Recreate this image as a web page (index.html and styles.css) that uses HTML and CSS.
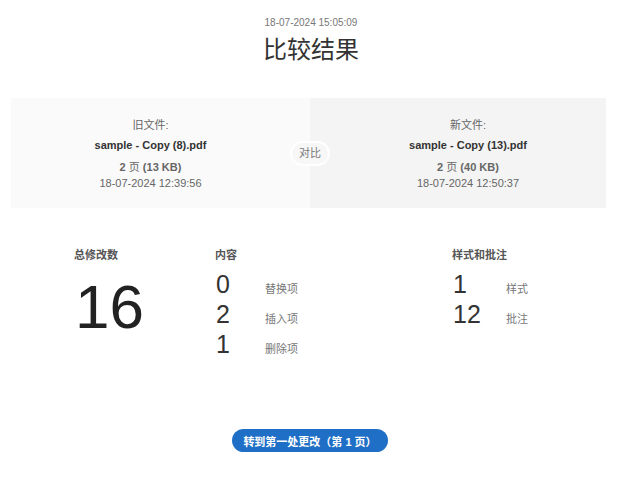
FILE: index.html
```html
<!DOCTYPE html>
<html lang="zh">
<head>
<meta charset="utf-8">
<link rel="stylesheet" href="styles.css">
</head>
<body>
<header class="head">
  <div class="stamp">18-07-2024 15:05:09</div>
  <h1 class="title">比较结果</h1>
</header>

<section class="files">
  <div class="file file-old">
    <div class="file-label">旧文件:</div>
    <div class="file-name">sample - Copy (8).pdf</div>
    <div class="file-size"><b>2</b> 页 <b>(13 KB)</b></div>
    <div class="file-date">18-07-2024 12:39:56</div>
  </div>
  <div class="file file-new">
    <div class="file-label">新文件:</div>
    <div class="file-name">sample - Copy (13).pdf</div>
    <div class="file-size"><b>2</b> 页 <b>(40 KB)</b></div>
    <div class="file-date">18-07-2024 12:50:37</div>
  </div>
  <div class="vs">对比</div>
</section>

<section class="stats">
  <div class="stat-total">
    <div class="stat-head">总修改数</div>
    <div class="big">16</div>
  </div>
  <div class="stat-group">
    <div class="stat-head">内容</div>
    <div class="row"><span class="num">0</span><span class="lbl">替换项</span></div>
    <div class="row"><span class="num">2</span><span class="lbl">插入项</span></div>
    <div class="row"><span class="num">1</span><span class="lbl">删除项</span></div>
  </div>
  <div class="stat-group stat-right">
    <div class="stat-head">样式和批注</div>
    <div class="row"><span class="num">1</span><span class="lbl">样式</span></div>
    <div class="row"><span class="num">12</span><span class="lbl">批注</span></div>
  </div>
</section>

<div class="actions">
  <button class="go">转到第一处更改（第 1 页）</button>
</div>
</body>
</html>
```

FILE: styles.css
```css
html, body {
  margin: 0;
  padding: 0;
  background: #fff;
}
body {
  font-family: "Liberation Sans", Arial, "Noto Sans CJK SC", sans-serif;
  color: #333;
  width: 622px;
}
.head {
  padding-top: 16px;
  text-align: center;
}
.stamp {
  font-size: 10px;
  line-height: 14px;
  color: #777;
}
.title {
  margin: 4px 0 0;
  font-size: 24px;
  line-height: 32px;
  font-weight: normal;
  color: #333;
}
.files {
  position: relative;
  margin: 32px 0 0 11px;
  width: 595px;
  height: 110px;
  display: grid;
  grid-template-columns: 299px 296px;
}
.file {
  text-align: center;
  padding-top: 19px;
  font-size: 11px;
  line-height: 16px;
  color: #666;
}
.file-old { background: #fafafa; padding-right: 20px; }
.file-new { background: #f4f4f4; padding-left: 20px; }
.file-label { margin-bottom: 4px; }
.file-name {
  font-weight: bold;
  color: #333;
  margin-bottom: 6px;
}
.file-size b { color: #666; }
.vs {
  position: absolute;
  left: 279px;
  top: 43px;
  width: 36px;
  height: 21px;
  line-height: 21px;
  border: 2px solid #fff;
  border-radius: 14px;
  background: #f7f7f7;
  text-align: center;
  font-size: 11px;
  color: #777;
}
.stats {
  margin: 39px 0 0 74px;
  display: grid;
  grid-template-columns: 141px 237px 1fr;
}
.stat-head {
  font-size: 11px;
  line-height: 16px;
  font-weight: bold;
  color: #555;
}
.big {
  margin-top: 13px;
  margin-left: 1px;
  font-size: 62px;
  line-height: 62px;
  color: #222;
}
.row {
  display: flex;
  align-items: baseline;
  height: 30px;
}
.stat-group .stat-head { margin-bottom: 6px; }
.num {
  width: 49px;
  font-size: 25px;
  line-height: 30px;
  color: #333;
  padding-left: 1px;
}
.stat-right .num { width: 53px; }
.lbl {
  font-size: 11px;
  color: #777;
}
.actions {
  margin-top: 70px;
  display: flex;
  justify-content: center;
}
.go {
  margin-left: -2px;
  width: 156px;
  height: 23px;
  border: none;
  border-radius: 12px;
  background: #1f6fc6;
  color: #fff;
  font-family: inherit;
  font-size: 11px;
  font-weight: bold;
  padding: 0;
}
```
